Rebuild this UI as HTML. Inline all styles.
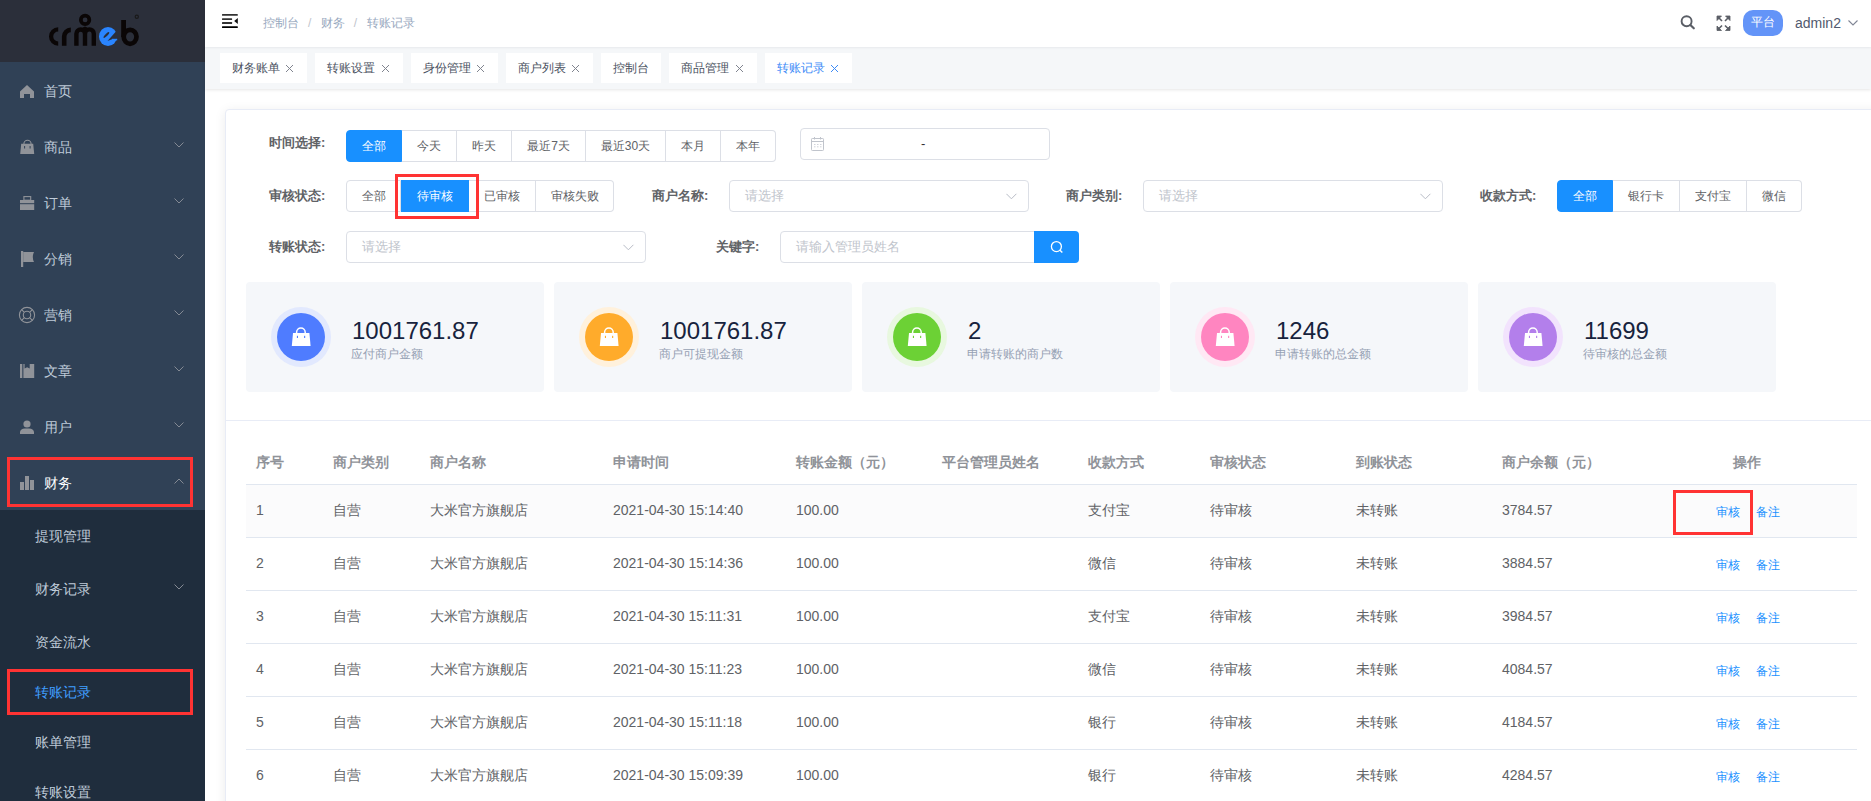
<!DOCTYPE html><html><head><meta charset="utf-8"><style>
*{margin:0;padding:0;box-sizing:border-box}
html,body{width:1871px;height:801px;overflow:hidden;background:#fff;font-family:"Liberation Sans",sans-serif;font-size:14px;color:#606266}
div,span{position:absolute;white-space:nowrap}
#side{left:0;top:0;width:205px;height:801px;background:#304156}
#logo{left:0;top:0;width:205px;height:62px;background:#2b2f3a}
.mi{left:0;width:205px;height:56px;color:#bfcbd9;font-size:14px;line-height:56px}
.mi .t{left:44px;top:1px}
.mi svg{position:absolute}
#sub{left:0;top:510px;width:205px;height:291px;background:#1f2d3d}
.si{left:35px;color:#bfcbd9;font-size:14px;padding-top:1px}
.red{border:3px solid #f33}
#hdr{left:205px;top:0;width:1666px;height:47px;background:#fff;z-index:2;box-shadow:0 1px 2px rgba(0,21,41,.06)}
#tags{left:205px;top:47px;width:1666px;height:42px;background:#f5f7f9;box-shadow:0 1px 3px rgba(0,0,0,.10)}
.tag{top:6px;height:30px;background:#fff;color:#495060;font-size:12px;line-height:30px}
.tag span{position:static}
#card{left:225px;top:109px;width:1700px;height:800px;background:#fff;border:1px solid #e8ecf6;border-radius:4px;box-shadow:0 2px 12px rgba(0,0,0,.08)}
.lbl{font-weight:bold;color:#606266;font-size:13px;line-height:32px}
.rg{height:32px}
.rb{top:0;height:32px;line-height:30px;border:1px solid #dcdfe6;background:#fff;color:#606266;font-size:12px;text-align:center}
.rb.on{background:#1890ff;border-color:#1890ff;color:#fff}
.inp{height:32px;border:1px solid #dcdfe6;border-radius:4px;background:#fff;color:#c0c4cc;font-size:13px;line-height:30px;padding-left:15px}
.stat{top:282px;width:298px;height:110px;background:#f5f7fa;border-radius:4px}
.num{left:106px;top:35px;font-size:24px;color:#17233d;line-height:28px}
.sl{left:105px;top:66px;font-size:12px;color:#96a1b4;line-height:13px}
.circ{left:25px;top:25px;width:60px;height:60px;border-radius:50%}
.circ i{position:absolute;left:6px;top:6px;width:48px;height:48px;border-radius:50%}
.circ svg{position:absolute;left:20px;top:20px}
.th{top:439px;line-height:47px;font-weight:bold;color:#909399;font-size:14px}
.row{left:246px;width:1611px;height:53px;border-bottom:1px solid #e1e7f0}
.td{top:-1px;line-height:52px;font-size:14px;color:#606266}
.op{top:1px;line-height:53px;font-size:12px;color:#1890ff}
</style></head><body>
<div id="side">
<div id="logo"><svg width="205" height="62" style="position:absolute;left:0;top:0"><g fill="none" stroke="#0a0606"><path d="M58.2 29.4 A7.1 7.1 0 0 0 58.2 43.6" stroke-width="4.25"/><path d="M64.2 45.75 V36.5 A6.6 6.6 0 0 1 70.8 29.9" stroke-width="4.6"/><path d="M76.4 45.75 V33.75 A4.3 4.3 0 0 1 85 33.75 V45.75 M85 33.75 A4.4 4.4 0 0 1 93.8 33.75 V45.75" stroke-width="4.4"/><circle cx="85.1" cy="19.9" r="4.25" stroke-width="3.7"/><path d="M123.6 20 V37" stroke-width="4.8"/><ellipse cx="130.1" cy="36.8" rx="6.4" ry="7" stroke-width="4.7"/><circle cx="136.8" cy="16.8" r="1.6" stroke-width="1.2" stroke="#1a1a1a"/></g><path d="M81.5 29 Q85 24 88.5 29 Z" fill="#0a0606"/><ellipse cx="108" cy="36.5" rx="9" ry="9.6" fill="#2a85ff"/><ellipse cx="106.4" cy="35" rx="3.9" ry="1.15" transform="rotate(-45 106.4 35)" fill="#2b2f3a"/><path d="M116.6 30.8 L107.5 41.1 L112 39.2 L119 38.8 L119 30.8 Z" fill="#2b2f3a"/><rect x="112" y="38.8" width="5.2" height="1.6" fill="#2a85ff"/></svg></div>
<div class="mi" style="top:62px"><svg width="14" height="14" style="left:20px;top:22px;overflow:visible" viewBox="0 0 14 14"><path d="M7 1 L14 7.5 V14 H10 V10 H4 V14 H0 V7.5 Z" fill="#909399"/></svg><span class="t" style="color:#bfcbd9">首页</span>
</div>
<div class="mi" style="top:118px"><svg width="14" height="14" style="left:20px;top:22px;overflow:visible" viewBox="0 0 14 14"><path d="M3.9 3.9 A3.6 3.6 0 0 1 11.1 3.9" stroke="#909399" stroke-width="1.1" fill="none"/><path d="M1.2 3.8 H13.2 L14.2 14 H0.2 Z" fill="#909399"/><rect x="4.1" y="6" width="1" height="2.5" fill="#304156"/><rect x="9.6" y="6" width="1" height="2.5" fill="#304156"/></svg><span class="t" style="color:#bfcbd9">商品</span>
<svg width="10" height="6" style="left:174px;top:24px"><path d="M0.5 0.5 L5 5 L9.5 0.5" stroke="#848a94" stroke-width="1" fill="none"/></svg>
</div>
<div class="mi" style="top:174px"><svg width="14" height="14" style="left:20px;top:22px;overflow:visible" viewBox="0 0 14 14"><rect x="3.9" y="0.6" width="6.8" height="3.6" stroke="#909399" stroke-width="1.1" fill="none"/><rect x="0" y="4" width="14.2" height="3.2" fill="#909399"/><rect x="0" y="8.2" width="14.2" height="5.8" fill="#909399"/></svg><span class="t" style="color:#bfcbd9">订单</span>
<svg width="10" height="6" style="left:174px;top:24px"><path d="M0.5 0.5 L5 5 L9.5 0.5" stroke="#848a94" stroke-width="1" fill="none"/></svg>
</div>
<div class="mi" style="top:230px"><svg width="14" height="14" style="left:20px;top:22px;overflow:visible" viewBox="0 0 14 14"><rect x="1" y="-1" width="2.2" height="16" fill="#909399"/><path d="M3.2 0 H14 Q11.6 5 14 10 H3.2 Z" fill="#909399"/></svg><span class="t" style="color:#bfcbd9">分销</span>
<svg width="10" height="6" style="left:174px;top:24px"><path d="M0.5 0.5 L5 5 L9.5 0.5" stroke="#848a94" stroke-width="1" fill="none"/></svg>
</div>
<div class="mi" style="top:286px"><svg width="14" height="14" style="left:20px;top:22px;overflow:visible" viewBox="0 0 14 14"><circle cx="7" cy="7" r="7.6" stroke="#909399" stroke-width="1.1" fill="none"/><circle cx="7" cy="7" r="3.7" stroke="#909399" stroke-width="1.1" fill="none"/><path d="M1.6 1.6 L4.4 4.4 M12.4 1.6 L9.6 4.4 M1.6 12.4 L4.4 9.6 M12.4 12.4 L9.6 9.6" stroke="#909399" stroke-width="1.1"/></svg><span class="t" style="color:#bfcbd9">营销</span>
<svg width="10" height="6" style="left:174px;top:24px"><path d="M0.5 0.5 L5 5 L9.5 0.5" stroke="#848a94" stroke-width="1" fill="none"/></svg>
</div>
<div class="mi" style="top:342px"><svg width="14" height="14" style="left:20px;top:22px;overflow:visible" viewBox="0 0 14 14"><rect x="0" y="0" width="2.3" height="14" fill="#909399"/><path d="M3.4 0 H4.6 V4.6 L7.1 3.2 L9.7 4.6 V0 H14.2 V14 H3.4 Z" fill="#909399"/></svg><span class="t" style="color:#bfcbd9">文章</span>
<svg width="10" height="6" style="left:174px;top:24px"><path d="M0.5 0.5 L5 5 L9.5 0.5" stroke="#848a94" stroke-width="1" fill="none"/></svg>
</div>
<div class="mi" style="top:398px"><svg width="14" height="14" style="left:20px;top:22px;overflow:visible" viewBox="0 0 14 14"><circle cx="7" cy="4" r="3.6" fill="#909399"/><path d="M0 14 V12 A5 4 0 0 1 5 8.5 H9 A5 4 0 0 1 14 12 V14 Z" fill="#909399"/></svg><span class="t" style="color:#bfcbd9">用户</span>
<svg width="10" height="6" style="left:174px;top:24px"><path d="M0.5 0.5 L5 5 L9.5 0.5" stroke="#848a94" stroke-width="1" fill="none"/></svg>
</div>
<div class="mi" style="top:454px"><svg width="14" height="14" style="left:20px;top:22px;overflow:visible" viewBox="0 0 14 14"><rect x="0" y="6" width="4" height="8" fill="#909399"/><rect x="5" y="0" width="4" height="14" fill="#909399"/><rect x="10" y="4" width="4" height="10" fill="#909399"/></svg><span class="t" style="color:#fff">财务</span>
<svg width="10" height="6" style="left:174px;top:24px"><path d="M0.5 5.5 L5 1 L9.5 5.5" stroke="#848a94" stroke-width="1" fill="none"/></svg>
</div>
<div id="sub">
<div class="si" style="top:0px;line-height:50px;color:#bfcbd9">提现管理</div>
<div class="si" style="top:50px;line-height:56px;color:#bfcbd9">财务记录</div>
<svg width="10" height="6" style="position:absolute;left:174px;top:74px"><path d="M0.5 0.5 L5 5 L9.5 0.5" stroke="#848a94" stroke-width="1" fill="none"/></svg>
<div class="si" style="top:106px;line-height:50px;color:#bfcbd9">资金流水</div>
<div class="si" style="top:156px;line-height:50px;color:#409eff">转账记录</div>
<div class="si" style="top:206px;line-height:50px;color:#bfcbd9">账单管理</div>
<div class="si" style="top:256px;line-height:50px;color:#bfcbd9">转账设置</div>
</div>
<div class="red" style="left:7px;top:457px;width:186px;height:50px"></div>
<div class="red" style="left:7px;top:669px;width:186px;height:46px"></div>
</div>
<div id="hdr">
<svg width="18" height="17" style="position:absolute;left:17px;top:13px"><rect x="0" y="1" width="15.8" height="1.8" rx="0.5" fill="#333"/><rect x="0" y="5.2" width="10.1" height="1.8" rx="0.5" fill="#333"/><rect x="0" y="9.1" width="10.1" height="1.8" rx="0.5" fill="#333"/><rect x="0" y="13.2" width="15.8" height="1.8" rx="0.5" fill="#000"/><path d="M15.8 4.9 L12.2 7.9 L15.8 10.9 Z" fill="#111"/></svg>
<div style="left:58px;top:0;line-height:46px;font-size:12px;color:#97a8be">控制台<span style="position:static;margin:0 9.5px 0 9px;color:#c0c4cc">/</span>财务<span style="position:static;margin:0 9.5px 0 9px;color:#c0c4cc">/</span>转账记录</div>
<svg width="18" height="18" style="position:absolute;left:1475px;top:13px"><circle cx="6.6" cy="8.2" r="5" stroke="#5a5e66" stroke-width="1.9" fill="none"/><path d="M10.4 12 L13.8 15.3" stroke="#5a5e66" stroke-width="2.2" stroke-linecap="round"/></svg>
<svg width="16" height="17" style="position:absolute;left:1511px;top:15px" fill="#5a5e66" stroke="#5a5e66" stroke-width="1.6"><path d="M2 2 L6 6 M13 2 L9 6 M2 14.5 L6 10.5 M13 14.5 L9 10.5"/><path d="M1 1 H5.5 L1 5.5 Z M14 1 H9.5 L14 5.5 Z M1 15.5 H5.5 L1 11 Z M14 15.5 H9.5 L14 11 Z" stroke-width="0.8"/></svg>
<div style="left:1538px;top:10px;width:40px;height:26px;border-radius:10px;background:#6394f8;color:#fff;font-size:12px;line-height:25px;text-align:center">平台</div>
<div style="left:1590px;top:0;line-height:46px;font-size:14px;color:#515a6e">admin2</div>
<svg width="12" height="8" style="position:absolute;left:1643px;top:20px"><path d="M0.5 0.5 L5 5 L9.5 0.5" stroke="#808695" stroke-width="1.1" fill="none"/></svg>
</div>
<div id="tags">
<div class="tag" style="left:15px;width:87px;color:#495060"><span style="position:absolute;left:12px;top:0">财务账单</span><svg width="9" height="9" style="position:absolute;left:65px;top:11px"><path d="M1 1 L8 8 M8 1 L1 8" stroke="#80848f" stroke-width="1" fill="none"/></svg></div>
<div class="tag" style="left:110px;width:88px;color:#495060"><span style="position:absolute;left:12px;top:0">转账设置</span><svg width="9" height="9" style="position:absolute;left:66px;top:11px"><path d="M1 1 L8 8 M8 1 L1 8" stroke="#80848f" stroke-width="1" fill="none"/></svg></div>
<div class="tag" style="left:206px;width:87px;color:#495060"><span style="position:absolute;left:12px;top:0">身份管理</span><svg width="9" height="9" style="position:absolute;left:65px;top:11px"><path d="M1 1 L8 8 M8 1 L1 8" stroke="#80848f" stroke-width="1" fill="none"/></svg></div>
<div class="tag" style="left:301px;width:87px;color:#495060"><span style="position:absolute;left:12px;top:0">商户列表</span><svg width="9" height="9" style="position:absolute;left:65px;top:11px"><path d="M1 1 L8 8 M8 1 L1 8" stroke="#80848f" stroke-width="1" fill="none"/></svg></div>
<div class="tag" style="left:396px;width:60px;color:#495060"><span style="position:absolute;left:12px;top:0">控制台</span></div>
<div class="tag" style="left:464px;width:88px;color:#495060"><span style="position:absolute;left:12px;top:0">商品管理</span><svg width="9" height="9" style="position:absolute;left:66px;top:11px"><path d="M1 1 L8 8 M8 1 L1 8" stroke="#80848f" stroke-width="1" fill="none"/></svg></div>
<div class="tag" style="left:560px;width:87px;color:#3b8af7"><span style="position:absolute;left:12px;top:0">转账记录</span><svg width="9" height="9" style="position:absolute;left:65px;top:11px"><path d="M1 1 L8 8 M8 1 L1 8" stroke="#3b8af7" stroke-width="1" fill="none"/></svg></div>
</div>
<div id="card"></div>
<div class="lbl" style="left:269px;top:127px">时间选择:</div>
<div class="lbl" style="left:269px;top:180px">审核状态:</div>
<div class="lbl" style="left:269px;top:231px">转账状态:</div>
<div class="lbl" style="left:652px;top:180px">商户名称:</div>
<div class="lbl" style="left:1066px;top:180px">商户类别:</div>
<div class="lbl" style="left:1480px;top:180px">收款方式:</div>
<div class="lbl" style="left:716px;top:231px">关键字:</div>
<div class="rg" style="left:346px;top:130px">
<div class="rb on" style="left:0px;width:56px;border-radius:4px 0 0 4px;">全部</div>
<div class="rb" style="left:56px;width:55px;border-left:0;">今天</div>
<div class="rb" style="left:111px;width:55px;border-left:0;">昨天</div>
<div class="rb" style="left:166px;width:74px;border-left:0;">最近7天</div>
<div class="rb" style="left:240px;width:80px;border-left:0;">最近30天</div>
<div class="rb" style="left:320px;width:55px;border-left:0;">本月</div>
<div class="rb" style="left:375px;width:55px;border-radius:0 4px 4px 0;border-left:0;">本年</div>
</div>
<div class="rg" style="left:346px;top:180px">
<div class="rb" style="left:0px;width:55px;border-radius:4px 0 0 4px;">全部</div>
<div class="rb on" style="left:55px;width:68px;border-left:0;">待审核</div>
<div class="rb" style="left:123px;width:67px;border-left:0;">已审核</div>
<div class="rb" style="left:190px;width:78px;border-radius:0 4px 4px 0;border-left:0;">审核失败</div>
</div>
<div class="rg" style="left:1557px;top:180px">
<div class="rb on" style="left:0px;width:56px;border-radius:4px 0 0 4px;">全部</div>
<div class="rb" style="left:56px;width:67px;border-left:0;">银行卡</div>
<div class="rb" style="left:123px;width:67px;border-left:0;">支付宝</div>
<div class="rb" style="left:190px;width:55px;border-radius:0 4px 4px 0;border-left:0;">微信</div>
</div>
<div class="inp" style="left:800px;top:128px;width:250px"></div>
<svg width="14" height="14" style="position:absolute;left:811px;top:137px" fill="none" stroke="#c0c4cc" stroke-width="1"><rect x="0.5" y="1.5" width="12" height="12" rx="0.8"/><path d="M0.5 4.5 H12.5 M3.5 0 V2.5 M9.5 0 V2.5"/><path d="M3 7.5 H4.5 M6 7.5 H7.5 M9 7.5 H10.5 M3 9.8 H4.5 M6 9.8 H7.5 M9 9.8 H10.5" stroke-width="1" stroke="#d0d3da"/></svg>
<div style="left:921px;top:128px;line-height:32px;font-size:13px;color:#303133">-</div>
<div class="inp" style="left:729px;top:180px;width:300px">请选择</div>
<svg width="12" height="8" style="position:absolute;left:1006px;top:193px"><path d="M0.4 0.8 L5.4 5.8 L10.4 0.8" stroke="#b8bcc6" stroke-width="1" fill="none"/></svg>
<div class="inp" style="left:1143px;top:180px;width:300px">请选择</div>
<svg width="12" height="8" style="position:absolute;left:1420px;top:193px"><path d="M0.4 0.8 L5.4 5.8 L10.4 0.8" stroke="#b8bcc6" stroke-width="1" fill="none"/></svg>
<div class="inp" style="left:346px;top:231px;width:300px">请选择</div>
<svg width="12" height="8" style="position:absolute;left:623px;top:244px"><path d="M0.4 0.8 L5.4 5.8 L10.4 0.8" stroke="#b8bcc6" stroke-width="1" fill="none"/></svg>
<div class="inp" style="left:780px;top:231px;width:255px;border-radius:4px 0 0 4px">请输入管理员姓名</div>
<div style="left:1034px;top:231px;width:45px;height:32px;background:#1890ff;border-radius:0 4px 4px 0"></div>
<svg width="14" height="14" style="position:absolute;left:1050px;top:240px"><circle cx="6.4" cy="6.6" r="5" stroke="#fff" stroke-width="1.3" fill="none"/><path d="M10 10.2 L12.3 12.5" stroke="#fff" stroke-width="1.4"/></svg>
<div class="stat" style="left:246px"><div class="circ" style="background:#e2e9fe"><i style="background:#4f7cff"></i><svg width="21" height="20" viewBox="0 0 21 20"><path d="M5.6 6.5 V5.3 A4.3 4.3 0 0 1 14.2 5.3 V6.5" stroke="#fff" stroke-width="1.5" fill="none"/><path d="M2 6 H18.4 L19.6 19 H0.8 Z" fill="#fff"/><rect x="5.9" y="8.8" width="1.1" height="2.2" fill="#4f7cff"/><rect x="13.1" y="8.8" width="1.1" height="2.2" fill="#4f7cff"/></svg></div><div class="num">1001761.87</div><div class="sl">应付商户金额</div></div>
<div class="stat" style="left:554px"><div class="circ" style="background:#fff1dc"><i style="background:#ffab2b"></i><svg width="21" height="20" viewBox="0 0 21 20"><path d="M5.6 6.5 V5.3 A4.3 4.3 0 0 1 14.2 5.3 V6.5" stroke="#fff" stroke-width="1.5" fill="none"/><path d="M2 6 H18.4 L19.6 19 H0.8 Z" fill="#fff"/><rect x="5.9" y="8.8" width="1.1" height="2.2" fill="#ffab2b"/><rect x="13.1" y="8.8" width="1.1" height="2.2" fill="#ffab2b"/></svg></div><div class="num">1001761.87</div><div class="sl">商户可提现金额</div></div>
<div class="stat" style="left:862px"><div class="circ" style="background:#e8f8df"><i style="background:#6cd135"></i><svg width="21" height="20" viewBox="0 0 21 20"><path d="M5.6 6.5 V5.3 A4.3 4.3 0 0 1 14.2 5.3 V6.5" stroke="#fff" stroke-width="1.5" fill="none"/><path d="M2 6 H18.4 L19.6 19 H0.8 Z" fill="#fff"/><rect x="5.9" y="8.8" width="1.1" height="2.2" fill="#6cd135"/><rect x="13.1" y="8.8" width="1.1" height="2.2" fill="#6cd135"/></svg></div><div class="num">2</div><div class="sl">申请转账的商户数</div></div>
<div class="stat" style="left:1170px"><div class="circ" style="background:#ffe8f4"><i style="background:#ff85c0"></i><svg width="21" height="20" viewBox="0 0 21 20"><path d="M5.6 6.5 V5.3 A4.3 4.3 0 0 1 14.2 5.3 V6.5" stroke="#fff" stroke-width="1.5" fill="none"/><path d="M2 6 H18.4 L19.6 19 H0.8 Z" fill="#fff"/><rect x="5.9" y="8.8" width="1.1" height="2.2" fill="#ff85c0"/><rect x="13.1" y="8.8" width="1.1" height="2.2" fill="#ff85c0"/></svg></div><div class="num">1246</div><div class="sl">申请转账的总金额</div></div>
<div class="stat" style="left:1478px"><div class="circ" style="background:#f2e3fd"><i style="background:#b37feb"></i><svg width="21" height="20" viewBox="0 0 21 20"><path d="M5.6 6.5 V5.3 A4.3 4.3 0 0 1 14.2 5.3 V6.5" stroke="#fff" stroke-width="1.5" fill="none"/><path d="M2 6 H18.4 L19.6 19 H0.8 Z" fill="#fff"/><rect x="5.9" y="8.8" width="1.1" height="2.2" fill="#b37feb"/><rect x="13.1" y="8.8" width="1.1" height="2.2" fill="#b37feb"/></svg></div><div class="num">11699</div><div class="sl">待审核的总金额</div></div>
<div style="left:226px;top:420px;width:1645px;height:1px;background:#e8ecf6"></div>
<div class="th" style="left:256px">序号</div>
<div class="th" style="left:333px">商户类别</div>
<div class="th" style="left:430px">商户名称</div>
<div class="th" style="left:613px">申请时间</div>
<div class="th" style="left:796px">转账金额（元）</div>
<div class="th" style="left:942px">平台管理员姓名</div>
<div class="th" style="left:1088px">收款方式</div>
<div class="th" style="left:1210px">审核状态</div>
<div class="th" style="left:1356px">到账状态</div>
<div class="th" style="left:1502px">商户余额（元）</div>
<div class="th" style="left:1733px">操作</div>
<div style="left:246px;top:484px;width:1611px;height:1px;background:#e1e7f0"></div>
<div class="row" style="top:485px;height:53px;background:#fbfbfc;">
<div class="td" style="left:10px">1</div>
<div class="td" style="left:87px">自营</div>
<div class="td" style="left:184px">大米官方旗舰店</div>
<div class="td" style="left:367px">2021-04-30 15:14:40</div>
<div class="td" style="left:550px">100.00</div>
<div class="td" style="left:842px">支付宝</div>
<div class="td" style="left:964px">待审核</div>
<div class="td" style="left:1110px">未转账</div>
<div class="td" style="left:1256px">3784.57</div>
<div class="op" style="left:1470px">审核</div><div class="op" style="left:1510px">备注</div>
</div>
<div class="row" style="top:538px;height:53px;">
<div class="td" style="left:10px">2</div>
<div class="td" style="left:87px">自营</div>
<div class="td" style="left:184px">大米官方旗舰店</div>
<div class="td" style="left:367px">2021-04-30 15:14:36</div>
<div class="td" style="left:550px">100.00</div>
<div class="td" style="left:842px">微信</div>
<div class="td" style="left:964px">待审核</div>
<div class="td" style="left:1110px">未转账</div>
<div class="td" style="left:1256px">3884.57</div>
<div class="op" style="left:1470px">审核</div><div class="op" style="left:1510px">备注</div>
</div>
<div class="row" style="top:591px;height:53px;">
<div class="td" style="left:10px">3</div>
<div class="td" style="left:87px">自营</div>
<div class="td" style="left:184px">大米官方旗舰店</div>
<div class="td" style="left:367px">2021-04-30 15:11:31</div>
<div class="td" style="left:550px">100.00</div>
<div class="td" style="left:842px">支付宝</div>
<div class="td" style="left:964px">待审核</div>
<div class="td" style="left:1110px">未转账</div>
<div class="td" style="left:1256px">3984.57</div>
<div class="op" style="left:1470px">审核</div><div class="op" style="left:1510px">备注</div>
</div>
<div class="row" style="top:644px;height:53px;">
<div class="td" style="left:10px">4</div>
<div class="td" style="left:87px">自营</div>
<div class="td" style="left:184px">大米官方旗舰店</div>
<div class="td" style="left:367px">2021-04-30 15:11:23</div>
<div class="td" style="left:550px">100.00</div>
<div class="td" style="left:842px">微信</div>
<div class="td" style="left:964px">待审核</div>
<div class="td" style="left:1110px">未转账</div>
<div class="td" style="left:1256px">4084.57</div>
<div class="op" style="left:1470px">审核</div><div class="op" style="left:1510px">备注</div>
</div>
<div class="row" style="top:697px;height:53px;">
<div class="td" style="left:10px">5</div>
<div class="td" style="left:87px">自营</div>
<div class="td" style="left:184px">大米官方旗舰店</div>
<div class="td" style="left:367px">2021-04-30 15:11:18</div>
<div class="td" style="left:550px">100.00</div>
<div class="td" style="left:842px">银行</div>
<div class="td" style="left:964px">待审核</div>
<div class="td" style="left:1110px">未转账</div>
<div class="td" style="left:1256px">4184.57</div>
<div class="op" style="left:1470px">审核</div><div class="op" style="left:1510px">备注</div>
</div>
<div class="row" style="top:750px;height:53px;">
<div class="td" style="left:10px">6</div>
<div class="td" style="left:87px">自营</div>
<div class="td" style="left:184px">大米官方旗舰店</div>
<div class="td" style="left:367px">2021-04-30 15:09:39</div>
<div class="td" style="left:550px">100.00</div>
<div class="td" style="left:842px">银行</div>
<div class="td" style="left:964px">待审核</div>
<div class="td" style="left:1110px">未转账</div>
<div class="td" style="left:1256px">4284.57</div>
<div class="op" style="left:1470px">审核</div><div class="op" style="left:1510px">备注</div>
</div>
<div class="red" style="left:1673px;top:490px;width:80px;height:45px"></div>
<div class="red" style="left:395px;top:174px;width:84px;height:45px"></div>
</body></html>
